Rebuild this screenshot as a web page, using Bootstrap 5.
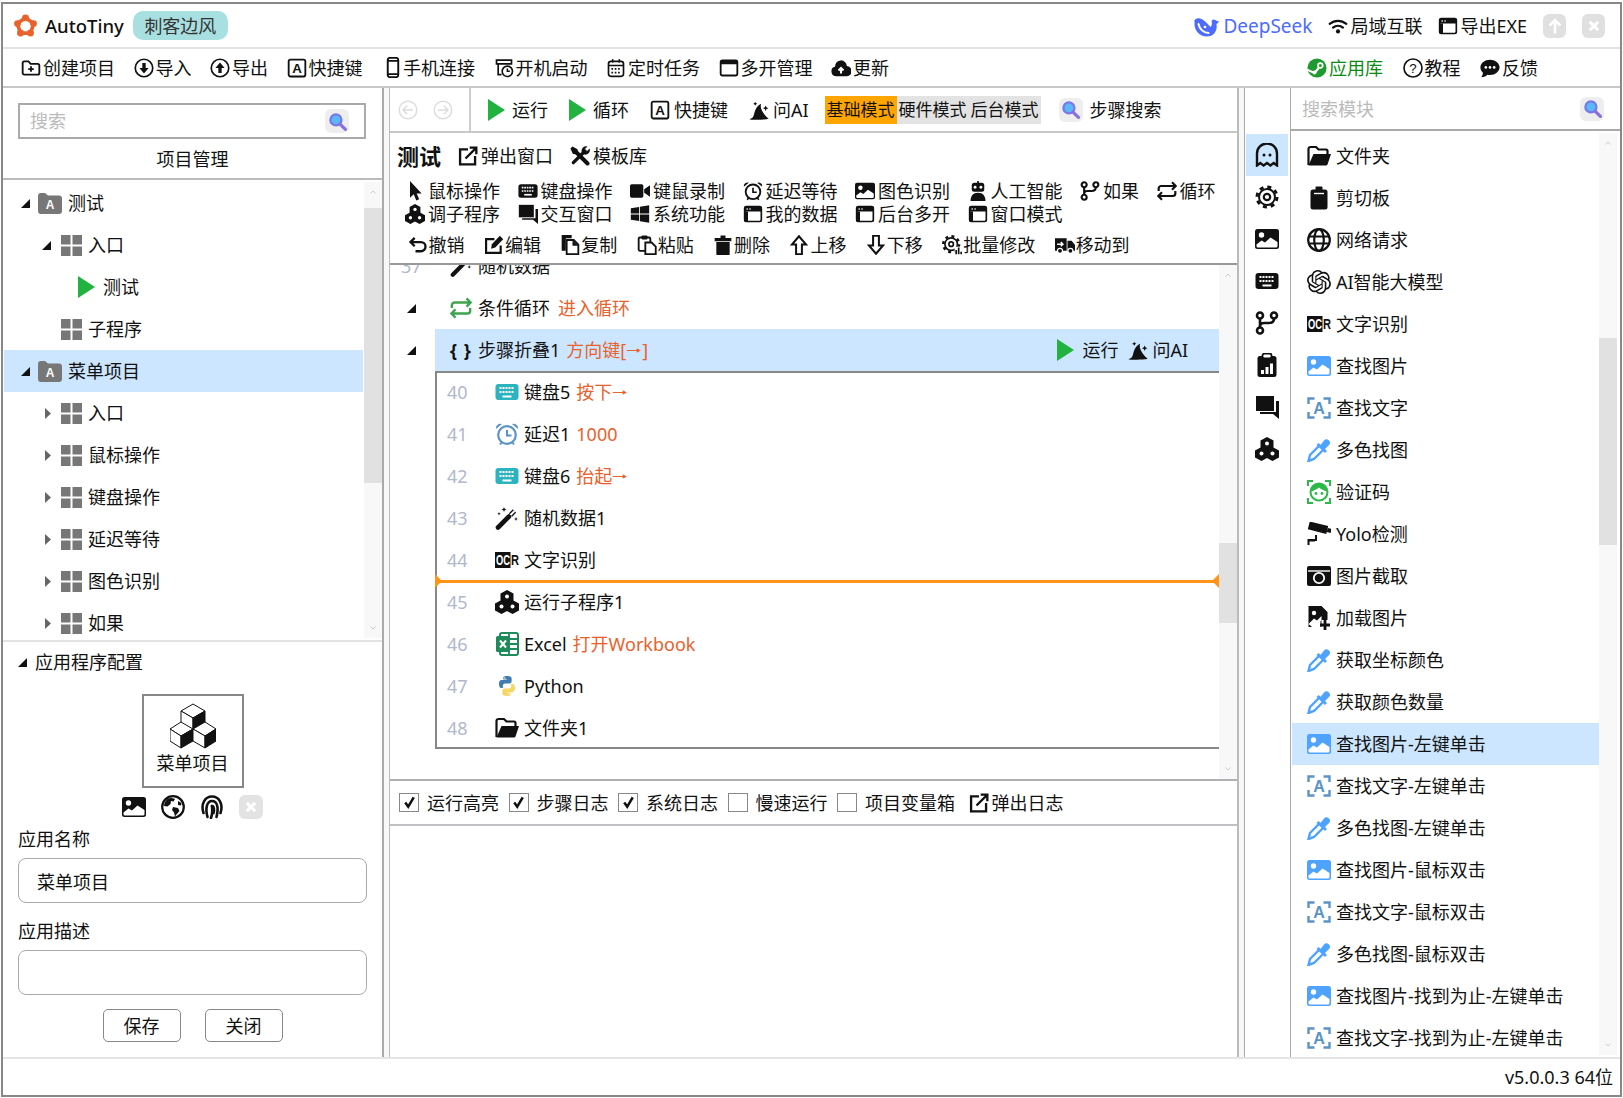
<!DOCTYPE html>
<html lang="zh-CN">
  <head>
    <meta charset="UTF-8" />
    <title>AutoTiny</title>
    <meta name="viewport" content="width=device-width, initial-scale=1.0" />
    <link href="https://cdn.jsdelivr.net/npm/bootstrap@5.3.3/dist/css/bootstrap.min.css" rel="stylesheet" />
    <style>
      body {
        font-family: "Noto Sans", "Noto Sans CJK SC", sans-serif;
        font-size: 18px;
        line-height: 24px;
        color: #111;
        background: #fff;
      }
      .app-win {
        width: 1621px;
        height: 1095px;
        margin: 2px 0 0 1px;
        border: 2px solid #888;
        overflow: hidden;
      }
      .ic { width: 20px; height: 20px; flex: none; }
      .ic-24 { width: 24px; height: 24px; flex: none; }
      .ic-play { width: 17px; height: 22px; flex: none; color: #22b23f; }
      .ic-phone { width: 16px; height: 21px; flex: none; }
      .ic-logo { width: 23px; height: 23px; flex: none; }

      .c-blue { color: #4ea3ff; }
      .c-steel { color: #5b93c7; }
      .c-teal { color: #2bb3bf; }
      .c-green { color: #3fa34d; }
      .c-lime { color: #2db84a; }

      /* title + main toolbar */
      .title-row { height: 45px; border-bottom: 2px solid #e3e3e3; padding: 0 15px 0 11px; }
      .brand { font-weight: 500; font-size: 18.5px; margin-left: 8px; }
      .tag-pill { width: 95px; height: 29px; background: #a8dfe0; border-radius: 10px; color: #333; margin-left: 9px; }
      .ds-text { color: #4d6bfe; font-size: 19px; }
      .ds-icon { width: 26px; height: 24px; color: #4d6bfe; }
      .sq-btn { width: 23px; height: 24px; background: #e0e0e0; border-radius: 6px; color: #fff; }
      .tool-row { height: 39px; border-bottom: 2px solid #c8c8c8; padding: 0 82px 0 18px; }
      .t-item { display: flex; align-items: center; gap: 2px; white-space: nowrap; }
      .top-tools { gap: 18.5px; }
      .top-links { gap: 19.5px; }
      .phone-item { margin-left: 4px; }
      .app-green { color: #0a8a12; }

      /* columns */
      .main-row { height: 969px; }
      .left-col { width: 381px; border-right: 2px solid #aaa; flex: none; }
      .gutter { width: 5px; background: #f8f8f8; flex: none; }
      .mid-col { width: 850px; border-left: 1px solid #bbb; border-right: 2px solid #bbb; flex: none; }
      .side-col { width: 47px; border-left: 1px solid #aaa; border-right: 1px solid #aaa; padding-top: 46px; flex: none; }
      .right-col { width: 329px; flex: none; }

      /* search boxes */
      .find-box { margin: 15px 16px 0 15px; height: 36px; border: 2px solid #aaa; padding: 0 15px 0 10px; }
      .find-input { border: 0; outline: 0; padding: 0; box-shadow: none; background: transparent; font-size: 18px; min-width: 0; }
      .find-input::placeholder { color: #bbb; }
      .find-btn { width: 24px; height: 24px; background: #eee; border-radius: 6px; flex: none; }
      .find-btn svg { width: 19px; height: 19px; }
      .panel-title { height: 41px; border-bottom: 2px solid #bbb; }

      /* scrollbars */
      .sb-track { width: 18px; flex: none; background: #f8f8f8; position: relative; overflow: hidden; }
      .sb-thumb { background: #e1e1e1; }
      .sb-arrow { position: absolute; left: 6px; width: 6px; height: 4px; color: #ccc; }
      .sb-up { top: 8px; }
      .sb-down { bottom: 8px; }
      .thumb-tree { margin-top: 26px; height: 275px; }
      .thumb-steps { margin-top: 278px; height: 80px; }
      .thumb-mods { margin-top: 205px; height: 207px; }

      /* project tree */
      .tree-area { height: 460px; padding-top: 2px; overflow: hidden; }
      .tree-list { width: 359px; flex: none; margin-left: 1px; }
      .tree-track { height: 456px; margin-left: 1px; }
      .tree-row { height: 42px; }
      .tree-row.active, .mod-row.active, .fold-head, .side-btn.active { background: #cce6ff; }
      .lv0 { padding-left: 17px; }
      .lv1 { padding-left: 38px; }
      .lv2 { padding-left: 74px; }
      .arrow-slot { display: flex; align-items: center; flex: none; }
      .lv0 .arrow-slot { width: 17px; }
      .lv1 .arrow-slot { width: 19px; }
      .arrow-open { width: 9px; height: 9px; color: #111; }
      .arrow-shut { width: 6px; height: 11px; color: #666; margin-left: 3px; }
      .tree-ic { width: 21px; height: 21px; color: #777; flex: none; margin-right: 6px; }
      .tree-folder { width: 24px; height: 21px; color: #777; flex: none; margin-right: 6px; }

      /* app config */
      .cfg-area { border-top: 2px solid #e3e3e3; }
      .cfg-head { height: 40px; padding-left: 15px; gap: 8px; }
      .app-tile { width: 102px; height: 94px; border: 2px solid #888; margin: 12px auto 0; }
      .cube-ic { width: 46px; height: 46px; margin-top: 7px; }
      .tile-name { line-height: 24px; margin-top: 2px; }
      .tile-tools { gap: 15px; margin-top: 7px; height: 24px; }
      .tile-x { width: 24px; height: 24px; background: #e3e3e3; border-radius: 6px; color: #fff; }
      .cfg-form { padding: 8px 15px 0; }
      .cfg-label { display: block; line-height: 24px; margin: 0 0 7px; }
      .cfg-input { height: 45px; border: 1.5px solid #aaa; border-radius: 8px; padding: 0 18px; font-size: 18px; color: #111; margin-bottom: 16px; box-shadow: none; }
      .cfg-actions { margin-top: -2px; }
      .cfg-btn { width: 78px; height: 33px; padding: 0; font-size: 18px; line-height: 28px; border: 1.5px solid #888; border-radius: 5px; background: #fff; color: #111; }

      /* centre toolbar */
      .run-row { height: 45px; border-bottom: 2px solid #c8c8c8; }
      .nav-part { width: 81px; height: 100%; border-right: 2px solid #ccc; padding-left: 8px; gap: 15px; flex: none; }
      .nav-ic { width: 20px; height: 20px; color: #ddd; }
      .run-part { padding-left: 17px; gap: 21px; }
      .run-item { display: flex; align-items: center; gap: 4px; white-space: nowrap; }
      .run-go { gap: 7px; }
      .mode-group { background: #e3e3e3; height: 28px; margin-left: -5px; }
      .mode-search { margin-left: -3px; }
      .mode-item { width: 72px; font-size: 17px; text-align: center; line-height: 28px; }
      .mode-item.on { background: #ffa500; }
      .op-panel { height: 132px; border-bottom: 2px solid #999; padding: 10px 0 0 7px; }
      .op-title { height: 26px; gap: 17px; }
      .op-name { font-weight: 700; font-size: 22px; }
      .op-link { display: flex; align-items: center; gap: 3px; }
      .op-grid { margin: 10px 0 0 8px; }
      .op-line { height: 23px; display: flex; gap: 17.5px; }
      .op-cell { display: flex; align-items: center; gap: 3px; white-space: nowrap; }
      .op-cell svg { width: 20px; height: 20px; flex: none; }
      .op-edit { margin: 8px 0 0 10.5px; height: 24px; display: flex; gap: 19.4px; }
      .op-edit .op-cell { gap: 1px; }

      /* step list */
      .step-area { height: 514px; overflow: hidden; }
      .step-list { width: 829px; flex: none; }
      .step-row { height: 42px; }
      .first-cut { margin-top: -20px; padding-left: 11px; }
      .first-cut .num { width: 49px; }
      .num { color: #b0b8cc; flex: none; }
      .outer-arrow { width: 45px; padding-left: 17px; flex: none; }
      .step-ic { width: 22px; height: 22px; flex: none; margin-right: 6px; }
      .loop-row { padding-left: 17px; }
      .loop-row .arrow-slot { width: 43px; }
      .val { color: #e8622c; margin-left: 6px; }
      .fold-wrap { height: 42px; }
      .fold-head { height: 42px; padding-left: 15px; padding-right: 31px; }
      .fold-run { gap: 8px; }
      .fold-run-text { margin-right: 2px; }
      .brace { font-weight: 700; width: 22px; margin-right: 6px; white-space: nowrap; letter-spacing: 1px; }
      .fold-box {
        margin-left: 45px;
        height: 378px;
        box-shadow: inset 2px 0 #888, inset 0 2px #888, inset 0 -2px #888;
      }
      .in-row { height: 42px; padding-left: 12px; position: relative; }
      .in-row .num { width: 48px; }
      .in-ic { width: 24px; height: 24px; flex: none; margin-right: 5px; }
      .in-kb { width: 24px; height: 18px; flex: none; margin-right: 5px; }
      .drop-line { position: absolute; left: 0; right: 0; bottom: -2px; height: 3px; background: #ff9419; }
      .drop-l, .drop-r { position: absolute; top: -6px; width: 0; height: 0; border-top: 7px solid transparent; border-bottom: 7px solid transparent; }
      .drop-l { left: 0; border-left: 7px solid #ff9419; }
      .drop-r { right: 0; border-right: 7px solid #ff9419; }
      .check-row { height: 47px; border-top: 2px solid #b0b0b5; border-bottom: 2px solid #c0c0c5; padding-left: 9px; }
      .chk { display: flex; align-items: center; gap: 8px; margin-right: 9.5px; white-space: nowrap; }
      .chk .form-check-input {
        width: 20px;
        height: 19px;
        margin: 0;
        border: 1.5px solid #888;
        border-radius: 0;
        box-shadow: none;
      }
      .chk .form-check-input:checked {
        background-color: #fff;
        border-color: #888;
        background-image: url("data:image/svg+xml,%3csvg xmlns='http://www.w3.org/2000/svg' viewBox='0 0 20 20'%3e%3cpath fill='none' stroke='%23111' stroke-width='3' d='M5 10l3.5 5L15 4'/%3e%3c/svg%3e");
      }

      /* module side */
      .side-btn { width: 42px; height: 42px; margin-left: 1px; }
      .side-btn svg { width: 24px; height: 24px; }
      .mod-search { height: 43px; border-bottom: 2px solid #aaa; padding: 0 16px 0 11px; }
      .mod-area { height: 922px; margin-top: 2px; overflow: hidden; }
      .mod-list { width: 307px; flex: none; margin-left: 1px; margin-top: 2px; }
      .mod-row { height: 42px; padding-left: 15px; gap: 5px; white-space: nowrap; }
      .status-row { height: 38px; border-top: 2px solid #e5e5e5; padding-right: 7px; }
    </style>
  </head>
  <body>
    <svg class="d-none" xmlns="http://www.w3.org/2000/svg">
      <symbol id="i-logo" viewBox="0 0 24 24">
        <polygon points="12,4 20.500,10 17.300,20 6.700,20 3.500,10" fill="#fff" stroke="#e8622c" stroke-width="3.800" stroke-linejoin="round" />
        <g fill="#e8622c"><circle cx="12" cy="4" r="3.600" /><circle cx="20.300" cy="10" r="3.600" /><circle cx="17.200" cy="19.800" r="3.600" /><circle cx="6.800" cy="19.800" r="3.600" /><circle cx="3.700" cy="10" r="3.600" /></g>
      </symbol>
      <symbol id="i-whale" viewBox="0 0 26 24">
        <path fill="currentColor" d="M1.500 9c-.5 7.500 5 13.500 12.500 13.500 5 0 8.500-3 9.500-8 .5-2 0-3 0-4.500 1-.5 2-1.500 2.500-3-1.500.5-2.500 0-3.500-1-1.500-1-3-.5-4 1 .5 2 1 4-1 6-2-2-5-6-9-8-2-1-5-1-7 1z" />
        <path fill="none" stroke="#fff" stroke-width="2" stroke-linecap="round" d="M5.500 10c1 5 5 9 10 9" />
        <circle cx="12" cy="13" r="1.300" fill="#fff" />
      </symbol>
      <symbol id="i-wifi" viewBox="0 0 24 24">
        <g fill="none" stroke="currentColor" stroke-width="2.600" stroke-linecap="round"><path d="M2 9.500c6-5 14-5 20 0" /><path d="M6 14c3.500-3 8.500-3 12 0" /></g>
        <circle cx="12" cy="18.500" r="2.500" fill="currentColor" />
      </symbol>
      <symbol id="i-appwin" viewBox="0 0 24 24">
        <rect x="2" y="3" width="20" height="18" rx="2" fill="none" stroke="currentColor" stroke-width="2" />
        <rect x="2" y="3" width="20" height="6" fill="currentColor" />
        <rect x="2" y="9" width="4" height="12" fill="currentColor" />
        <circle cx="5" cy="6" r="1" fill="#fff" /><circle cx="8.500" cy="6" r="1" fill="#fff" />
      </symbol>
      <symbol id="i-winline" viewBox="0 0 24 24">
        <rect x="2" y="3" width="20" height="18" rx="2" fill="none" stroke="currentColor" stroke-width="2.200" />
        <rect x="2" y="3" width="20" height="4.500" fill="currentColor" />
      </symbol>
      <symbol id="i-folderplus" viewBox="0 0 24 24">
        <path fill="none" stroke="currentColor" stroke-width="2.200" d="M2 6a2 2 0 0 1 2-2h5l2.500 3H20a2 2 0 0 1 2 2v9a2 2 0 0 1-2 2H4a2 2 0 0 1-2-2z" />
        <path fill="none" stroke="currentColor" stroke-width="2.200" d="M12 10v6.500M8.700 13.300h6.600" />
      </symbol>
      <symbol id="i-downc" viewBox="0 0 24 24">
        <circle cx="12" cy="12" r="10.500" fill="none" stroke="currentColor" stroke-width="2" />
        <path fill="currentColor" d="M10 6h4v6h3.500L12 18.500 6.500 12H10z" />
      </symbol>
      <symbol id="i-upc" viewBox="0 0 24 24">
        <circle cx="12" cy="12" r="10.500" fill="none" stroke="currentColor" stroke-width="2" />
        <path fill="currentColor" d="M10 18h4v-6h3.500L12 5.500 6.500 12H10z" />
      </symbol>
      <symbol id="i-abox" viewBox="0 0 24 24">
        <rect x="2" y="2" width="20" height="20" rx="2" fill="none" stroke="currentColor" stroke-width="2.200" />
        <path d="M3 22.500h18" stroke="currentColor" stroke-width="1.500" />
        <text x="12" y="18" text-anchor="middle" font-size="16" font-weight="700" font-family="Liberation Sans" fill="currentColor">A</text>
      </symbol>
      <symbol id="i-phone" viewBox="0 0 16 24">
        <rect x="2" y="1" width="12" height="22" rx="2.500" fill="none" stroke="currentColor" stroke-width="2.200" />
        <path d="M2 4.500h12M2 19.500h12" stroke="currentColor" stroke-width="2" />
      </symbol>
      <symbol id="i-boot" viewBox="0 0 24 24">
        <path fill="none" stroke="currentColor" stroke-width="2" d="M3 2.500h18v4.500H3zM5 7v13h4" />
        <circle cx="16" cy="16" r="6.200" fill="#fff" stroke="currentColor" stroke-width="2" />
        <path fill="none" stroke="currentColor" stroke-width="1.800" d="M16 12.500V16h3" />
      </symbol>
      <symbol id="i-cal" viewBox="0 0 24 24">
        <rect x="3" y="4" width="18" height="18" rx="3" fill="none" stroke="currentColor" stroke-width="2" />
        <path fill="none" stroke="currentColor" stroke-width="2" d="M8 1.500v4M16 1.500v4M3 9h18" />
        <path fill="none" stroke="currentColor" stroke-width="2" stroke-dasharray="2 2" d="M6.500 13h11M6.500 17.500h11" />
      </symbol>
      <symbol id="i-cloud" viewBox="0 0 24 24">
        <path fill="currentColor" d="M6.500 22a6 6 0 0 1-1.500-11.800A7 7 0 0 1 19 9.500 6.200 6.200 0 0 1 18 22z" />
        <path fill="none" stroke="#fff" stroke-width="2.400" d="M12 18.500v-6M9 15l3-3 3 3" />
      </symbol>
      <symbol id="i-steam" viewBox="0 0 24 24">
        <circle cx="12" cy="12" r="11.500" fill="#1f9a2e" />
        <path d="M0 14l9 4 5-6" fill="none" stroke="#fff" stroke-width="2.600" />
        <circle cx="16" cy="9" r="3.800" fill="#fff" /><circle cx="16" cy="9" r="1.800" fill="#1f9a2e" />
        <circle cx="9" cy="17.500" r="2.400" fill="#fff" />
      </symbol>
      <symbol id="i-help" viewBox="0 0 24 24">
        <circle cx="12" cy="12" r="10.800" fill="none" stroke="currentColor" stroke-width="2" />
        <text x="12" y="18" text-anchor="middle" font-size="16" font-family="Liberation Sans" fill="currentColor">?</text>
      </symbol>
      <symbol id="i-chatd" viewBox="0 0 24 24">
        <path fill="currentColor" d="M12 2c6 0 11.500 4 11.500 9.200S18 20.500 12 20.500c-1.200 0-2.300-.2-3.300-.5C7.500 21.500 5 23 1.500 23c1-1 2-3 2-5.200C1.500 16 .5 13.600.5 11.200.5 6 6 2 12 2z" />
        <g fill="#fff"><circle cx="7" cy="11.300" r="1.600" /><circle cx="12" cy="11.300" r="1.600" /><circle cx="17" cy="11.300" r="1.600" /></g>
      </symbol>
      <symbol id="i-play" viewBox="0 0 17 22"><polygon points="0,0 17,11 0,22" fill="currentColor" /></symbol>
      <symbol id="i-hat" viewBox="0 0 24 24">
        <path fill="currentColor" d="M.5 23c3-.5 4.500-2 5.500-5.500 1-4.500 2.500-10 8.500-13-1 3.500 0 6.500 1.500 9 1.500 2.500 3.500 6 7.500 9-2 1.200-21.500 1.500-23 .5z" />
        <path fill="currentColor" d="M20 6.500l1 2.300 2.300 1-2.300 1-1 2.300-1-2.300-2.300-1 2.300-1zM7.500 2l.8 1.700L10 4.500l-1.700.8L7.500 7l-.8-1.700L5 4.500l1.700-.8z" />
      </symbol>
      <symbol id="i-find" viewBox="0 0 24 24">
        <circle cx="10" cy="10" r="7" fill="#5ab8f8" stroke="#7878e8" stroke-width="2.800" />
        <path d="M15.500 15.500l6.500 6.500" stroke="#8a6fe0" stroke-width="4" stroke-linecap="round" />
      </symbol>
      <symbol id="i-popup" viewBox="0 0 24 24">
        <path fill="none" stroke="currentColor" stroke-width="2.800" d="M12 4H2.500v18h18V12" />
        <path fill="none" stroke="currentColor" stroke-width="2.800" d="M9 15L21.500 2.500M14 2h8v8" />
      </symbol>
      <symbol id="i-tools" viewBox="0 0 24 24">
        <g fill="none" stroke="currentColor" stroke-linecap="round"><path d="M6 6l15 15" stroke-width="4.800" /><path d="M18 6L4 20" stroke-width="4" /></g>
        <path fill="currentColor" d="M.5 3L3 .5l6 3.500.5 4-2 2-4-.5zM14 7a5.500 5.500 0 0 1 7-6.500l-3.500 3.500L20 6.500l3.500-3.500A5.500 5.500 0 0 1 16.500 10z" />
      </symbol>
      <symbol id="i-cursor" viewBox="0 0 24 24"><polygon points="6,0 6,20 10.500,16 13.500,23.500 17,22 14,15 20,15" fill="currentColor" /></symbol>
      <symbol id="i-kb" viewBox="0 0 24 18">
        <rect x=".5" y="1" width="23" height="16" rx="3" fill="currentColor" />
        <g stroke="#fff" stroke-width="2" fill="none"><path stroke-dasharray="2 1" d="M4.500 5h15M4.500 9h15" /><path d="M7.500 13.500h9" /></g>
      </symbol>
      <symbol id="i-video" viewBox="0 0 24 24">
        <rect x="0" y="4" width="16" height="16" rx="2" fill="currentColor" /><polygon points="17,10 24,5 24,19 17,14" fill="currentColor" />
      </symbol>
      <symbol id="i-alarm" viewBox="0 0 24 24">
        <circle cx="12" cy="13" r="8.800" fill="none" stroke="currentColor" stroke-width="2.200" />
        <path fill="none" stroke="currentColor" stroke-width="2" d="M12 8v5.500h4.500M5 22.500l2-2.500M19 22.500l-2-2.500" />
        <path fill="currentColor" d="M1 7a4.500 4.500 0 0 1 6-5zM23 7a4.500 4.500 0 0 0-6-5z" />
      </symbol>
      <symbol id="i-image" viewBox="0 0 24 24">
        <rect x="0" y="2" width="24" height="20" rx="2.500" fill="currentColor" />
        <circle cx="6.500" cy="8" r="2.700" fill="#fff" />
        <path fill="#fff" d="M1.500 17.500l5-4 3.500 2 5.500-5 7 4.500v4a1.500 1.500 0 0 1-1.500 1.500H3a1.500 1.500 0 0 1-1.500-1.500z" />
      </symbol>
      <symbol id="i-robot" viewBox="0 0 24 24">
        <rect x="4.500" y="2" width="15" height="11" rx="3" fill="currentColor" />
        <path d="M12 0v3" stroke="currentColor" stroke-width="2" />
        <circle cx="8.500" cy="7.500" r="1.700" fill="#fff" /><circle cx="15.500" cy="7.500" r="1.700" fill="#fff" />
        <path fill="currentColor" d="M3 24c0-6 3-10 9-10s9 4 9 10z" />
      </symbol>
      <symbol id="i-branch" viewBox="0 0 24 24">
        <g fill="none" stroke="currentColor" stroke-width="2.600"><circle cx="5" cy="4.500" r="3" /><circle cx="5" cy="19.500" r="3" /><circle cx="19" cy="4.500" r="3" /><path d="M5 7.500v9M19 7.500c0 3-2 4.500-5 4.500H9c-2.500 0-4 1-4 3" /></g>
      </symbol>
      <symbol id="i-loop" viewBox="0 0 24 24">
        <g fill="none" stroke="currentColor" stroke-width="2.600"><path d="M2 12V9a3 3 0 0 1 3-3h17M18 1.500L22.500 6 18 10.500" /><path d="M22 12v3a3 3 0 0 1-3 3H2M6 13.500L1.500 18 6 22.500" /></g>
      </symbol>
      <symbol id="i-cubes" viewBox="0 0 24 24">
        <g fill="currentColor"><path d="M12 0l6.500 3.500v7L12 14 5.500 10.500v-7z" /><path d="M6.500 10l6.500 3.500v7L6.500 24 0 20.500v-7z" /><path d="M17.500 10l6.500 3.500v7L17.500 24 11 20.500v-7z" /></g>
        <g fill="#fff"><circle cx="12" cy="6.500" r="2" /><circle cx="6.500" cy="16.500" r="2" /><circle cx="17.500" cy="16.500" r="2" /></g>
      </symbol>
      <symbol id="i-chats" viewBox="0 0 24 24">
        <path fill="currentColor" d="M1 1h18v15H1z" /><path fill="currentColor" d="M21 6h3v18l-6-5H5v-2h16z" />
      </symbol>
      <symbol id="i-win" viewBox="0 0 24 24">
        <g fill="currentColor"><polygon points="1,5 11,3.500 11,11.500 1,11.500" /><polygon points="12,3.300 23,1.500 23,11.500 12,11.500" /><polygon points="1,12.500 11,12.500 11,20.500 1,19" /><polygon points="12,12.500 23,12.500 23,22.500 12,20.700" /></g>
      </symbol>
      <symbol id="i-undo" viewBox="0 0 24 24">
        <path fill="none" stroke="currentColor" stroke-width="2.800" d="M8 3.500L3 8.500l5 5M3 8.500h12.500a5.500 5.500 0 0 1 0 11H9" />
      </symbol>
      <symbol id="i-pencil" viewBox="0 0 24 24">
        <path fill="none" stroke="currentColor" stroke-width="2.600" d="M20 12.500v9H2.500V5h10" />
        <path fill="currentColor" d="M8.500 16.500l1-5.500L19 1l4 4-9.500 10z" />
      </symbol>
      <symbol id="i-copy" viewBox="0 0 24 24">
        <path fill="currentColor" d="M2 0h12v4H7v15H2z" />
        <path fill="#fff" stroke="currentColor" stroke-width="2.200" d="M8 6h8.500L22 11.500v11.400H8z" />
        <path fill="currentColor" d="M15 6l7 7h-7z" />
      </symbol>
      <symbol id="i-paste" viewBox="0 0 24 24">
        <rect x="2" y="3" width="14" height="16" rx="1.500" fill="none" stroke="currentColor" stroke-width="2.200" />
        <rect x="5.500" y=".5" width="7" height="5" rx="1" fill="currentColor" />
        <path fill="#fff" stroke="currentColor" stroke-width="2.200" d="M10 9h7.500l5 5v9H10z" />
      </symbol>
      <symbol id="i-trash" viewBox="0 0 24 24">
        <path fill="currentColor" d="M2 3.500h20V7.500H2zM9 .5h6v3H9zM4 8.500h16V23a1 1 0 0 1-1 1H5a1 1 0 0 1-1-1z" />
      </symbol>
      <symbol id="i-upo" viewBox="0 0 24 24"><path fill="none" stroke="currentColor" stroke-width="2.400" d="M12 1.500L3.500 11.500h5V23h7V11.500h5z" /></symbol>
      <symbol id="i-downo" viewBox="0 0 24 24"><path fill="none" stroke="currentColor" stroke-width="2.400" d="M12 22.500l8.500-10h-5V1h-7v11.500h-5z" /></symbol>
      <symbol id="i-gear" viewBox="0 0 24 24">
        <g fill="none" stroke="currentColor"><circle cx="12" cy="12" r="10" stroke-width="3" stroke-dasharray="4 3.850" /><circle cx="12" cy="12" r="8" stroke-width="2" /><circle cx="12" cy="12" r="3.200" stroke-width="2.200" /></g>
      </symbol>
      <symbol id="i-gearbars" viewBox="0 0 24 24">
        <g fill="none" stroke="currentColor"><circle cx="11" cy="11" r="9.500" stroke-width="3" stroke-dasharray="3.500 3.960" /><circle cx="11" cy="11" r="7.500" stroke-width="2" /><circle cx="11" cy="11" r="2.700" stroke-width="2" /></g>
        <rect x="15" y="14" width="9" height="10" fill="#fff" /><path fill="currentColor" d="M16 18h2v5h-2zM19 15h2v8h-2zM22 20h2v3h-2z" />
      </symbol>
      <symbol id="i-truck" viewBox="0 0 24 24">
        <path fill="currentColor" d="M0 4h14v15H0zM15 7h5l4 5v7h-9z" />
        <g fill="currentColor" stroke="#fff" stroke-width="1.400"><circle cx="6" cy="19" r="3" /><circle cx="18.500" cy="19" r="3" /></g>
        <path fill="none" stroke="#fff" stroke-width="1.800" d="M2.500 11h7M7 8.500l2.500 2.500L7 13.500" />
      </symbol>
      <symbol id="i-wand" viewBox="0 0 24 24">
        <path d="M3 21.500L14 10.500" stroke="currentColor" stroke-width="4.600" stroke-linecap="round" />
        <path d="M15.500 9l4-4" stroke="currentColor" stroke-width="4.600" />
        <path d="M15.500 9l4-4" stroke="#fff" stroke-width="2" />
        <path fill="currentColor" d="M9 1l.7 1.800L11.500 3.500l-1.800.7L9 6l-.7-1.800L6.500 3.500l1.800-.7zM21 11l.6 1.500 1.400.5-1.400.6L21 15l-.6-1.400-1.400-.6 1.400-.5zM4 6l.5 1.200 1.200.5-1.200.5L4 9.500l-.5-1.300-1.200-.5 1.200-.5z" />
      </symbol>
      <symbol id="i-excel" viewBox="0 0 24 24">
        <rect x="5" y="1" width="18" height="22" rx="2" fill="#fff" stroke="#1f8a5a" stroke-width="2" />
        <path fill="none" stroke="#1f8a5a" stroke-width="1.800" d="M14 1v22M14 7h9M14 12h9M14 17h9" />
        <rect x="1" y="4" width="14" height="16" rx="1.500" fill="#1f8a5a" />
        <path fill="none" stroke="#fff" stroke-width="2" d="M5 8.500l6 7M11 8.500l-6 7" />
      </symbol>
      <symbol id="i-python" viewBox="0 0 24 24">
        <path fill="#3f7cb0" d="M11.900 2C8 2 8.300 3.700 8.300 3.700v1.800h3.800V6H6.800S4 5.700 4 9.900s2.400 4 2.400 4h1.500v-2s-.1-2.400 2.400-2.400h4s2.300 0 2.300-2.200V4.300S17 2 11.900 2zM9.800 3.300a.7.7 0 1 1 0 1.400.7.7 0 0 1 0-1.400z" />
        <path fill="#f7d663" d="M12.100 22c3.900 0 3.600-1.700 3.600-1.700v-1.800h-3.800V18h5.300s2.800.3 2.800-3.900-2.400-4-2.400-4h-1.500v2s.1 2.400-2.400 2.400h-4s-2.300 0-2.300 2.200v3S7 22 12.100 22zm2.100-1.300a.7.7 0 1 1 0-1.400.7.7 0 0 1 0 1.400z" />
      </symbol>
      <symbol id="i-open" viewBox="0 0 24 24">
        <path fill="none" stroke="currentColor" stroke-width="2.200" d="M1.500 21V5a2 2 0 0 1 2-2h5.500l2.500 2.500H19a1.500 1.500 0 0 1 1.500 1.500V10" />
        <path fill="currentColor" d="M6.500 10H24l-3.500 10.500a1.500 1.500 0 0 1-1.400 1H1.500z" />
      </symbol>
      <symbol id="i-clip" viewBox="0 0 24 24">
        <rect x="3.500" y="3.500" width="17" height="20" rx="2.500" fill="currentColor" />
        <rect x="8.500" y=".5" width="7" height="5" rx="1" fill="currentColor" />
        <path d="M7 7.500h10" stroke="#fff" stroke-width="1.400" />
      </symbol>
      <symbol id="i-globe" viewBox="0 0 24 24">
        <g fill="none" stroke="currentColor" stroke-width="2.200"><circle cx="12" cy="12" r="10.800" /><ellipse cx="12" cy="12" rx="4.800" ry="10.800" /><path d="M2.500 8.500h19M2.500 15.500h19" /></g>
      </symbol>
      <symbol id="i-openai" viewBox="0 0 24 24">
        <path fill="currentColor" d="M22.2819 9.8211a5.9847 5.9847 0 0 0-.5157-4.9108 6.0462 6.0462 0 0 0-6.5098-2.9A6.0651 6.0651 0 0 0 4.9807 4.1818a5.9847 5.9847 0 0 0-3.9977 2.9 6.0462 6.0462 0 0 0 .7427 7.0966 5.98 5.98 0 0 0 .511 4.9107 6.051 6.051 0 0 0 6.5146 2.9001A5.9847 5.9847 0 0 0 13.2599 24a6.0557 6.0557 0 0 0 5.7718-4.2058 5.9894 5.9894 0 0 0 3.9977-2.9001 6.0557 6.0557 0 0 0-.7475-7.0729zm-9.022 12.6081a4.4755 4.4755 0 0 1-2.8764-1.0408l.1419-.0804 4.7783-2.7582a.7948.7948 0 0 0 .3927-.6813v-6.7369l2.02 1.1686a.071.071 0 0 1 .038.052v5.5826a4.504 4.504 0 0 1-4.4945 4.4944zm-9.6607-4.1254a4.4708 4.4708 0 0 1-.5346-3.0137l.142.0852 4.783 2.7582a.7712.7712 0 0 0 .7806 0l5.8428-3.3685v2.3324a.0804.0804 0 0 1-.0332.0615L9.74 19.9502a4.4992 4.4992 0 0 1-6.1408-1.6464zM2.3408 7.8956a4.485 4.485 0 0 1 2.3655-1.9728V11.6a.7664.7664 0 0 0 .3879.6765l5.8144 3.3543-2.0201 1.1685a.0757.0757 0 0 1-.071 0l-4.8303-2.7865A4.504 4.504 0 0 1 2.3408 7.872zm16.5963 3.8558L13.1038 8.364 15.1192 7.2a.0757.0757 0 0 1 .071 0l4.8303 2.7913a4.4944 4.4944 0 0 1-.6765 8.1042v-5.6772a.79.79 0 0 0-.407-.667zm2.0107-3.0231l-.142-.0852-4.7735-2.7818a.7759.7759 0 0 0-.7854 0L9.409 9.2297V6.8974a.0662.0662 0 0 1 .0284-.0615l4.8303-2.7866a4.4992 4.4992 0 0 1 6.6802 4.66zM8.3065 12.863l-2.02-1.1638a.0804.0804 0 0 1-.038-.0567V6.0742a4.4992 4.4992 0 0 1 7.3757-3.4537l-.142.0805L8.704 5.459a.7948.7948 0 0 0-.3927.6813zm1.0976-2.3654l2.602-1.4998 2.6069 1.4998v2.9994l-2.5974 1.4997-2.6067-1.4997Z" />
      </symbol>
      <symbol id="i-ocr" viewBox="0 0 24 16">
        <rect x="0" y="0" width="15.500" height="16" fill="currentColor" />
        <text x="1" y="13" font-size="14" font-weight="700" font-family="Liberation Sans" fill="#fff" textLength="14" lengthAdjust="spacingAndGlyphs">OC</text>
        <text x="16" y="13" font-size="14" font-weight="700" font-family="Liberation Sans" fill="currentColor" textLength="8" lengthAdjust="spacingAndGlyphs">R</text>
      </symbol>
      <symbol id="i-scan" viewBox="0 0 24 24">
        <path fill="none" stroke="currentColor" stroke-width="2.400" d="M1.500 8V2.500h6M16.500 2.500h6V8M22.500 16v5.500h-6M7.500 21.500h-6V16" />
        <text x="12" y="18" text-anchor="middle" font-size="16" font-weight="700" font-family="Liberation Sans" fill="currentColor">A</text>
      </symbol>
      <symbol id="i-drop" viewBox="0 0 24 24">
        <path fill="none" stroke="currentColor" stroke-width="2.400" d="M12.500 7.500l4 4-9.500 9.500-5.500 2 1.500-6z" />
        <path fill="currentColor" d="M11.500 5l2 2 3.500-4.500a3.300 3.300 0 0 1 5 4.500L18 11l2 2-2 2L9.500 7z" />
      </symbol>
      <symbol id="i-face" viewBox="0 0 24 24">
        <path fill="none" stroke="currentColor" stroke-width="2" d="M1 6V1h5M18 1h5v5M23 18v5h-5M6 23H1v-5" />
        <circle cx="12" cy="12" r="8.500" fill="none" stroke="currentColor" stroke-width="2" />
        <path fill="currentColor" d="M3.500 11.500c1-5.500 4-8 8.500-8s7.500 2.500 8.500 8c-3-.5-6-2-8.500-4-2.500 2-5.500 3.500-8.500 4z" />
        <circle cx="9" cy="13.500" r="1.400" fill="currentColor" /><circle cx="15" cy="13.500" r="1.400" fill="currentColor" />
      </symbol>
      <symbol id="i-cctv" viewBox="0 0 24 24">
        <g transform="rotate(14 12 8)" fill="currentColor"><rect x="1" y="2" width="19" height="8" /><rect x="20" y="4" width="4" height="4" /></g>
        <path fill="none" stroke="currentColor" stroke-width="2" d="M9 13v5H1.500v5M1.500 18.500H8" />
      </symbol>
      <symbol id="i-camera" viewBox="0 0 24 24">
        <rect x="0" y="2" width="24" height="20" rx="2" fill="currentColor" />
        <path d="M1 7h22" stroke="#fff" stroke-width="1.400" />
        <circle cx="12" cy="14" r="5.200" fill="none" stroke="#fff" stroke-width="1.800" />
      </symbol>
      <symbol id="i-fileimg" viewBox="0 0 24 24">
        <path fill="currentColor" d="M1.500 0h13l6 6v8h-6v7h-13z" />
        <circle cx="7" cy="7" r="2.200" fill="#fff" />
        <path fill="#fff" d="M1.500 18l5.500-5.500 3 2 4.500-4.500v5h-1v6H5z" />
        <path fill="none" stroke="currentColor" stroke-width="2.800" d="M18 14v10M13 19h10" />
      </symbol>
      <symbol id="i-ghost" viewBox="0 0 24 24">
        <path fill="none" stroke="currentColor" stroke-width="2.400" d="M2 22.500V10.500a10 10 0 0 1 20 0v12l-3.300-2.500-3.300 2.500-3.400-2.500-3.400 2.500-3.300-2.500z" />
        <circle cx="9" cy="12" r="1.500" fill="currentColor" /><circle cx="15" cy="12" r="1.500" fill="currentColor" />
      </symbol>
      <symbol id="i-clipdata" viewBox="0 0 24 24">
        <rect x="2.500" y="3" width="19" height="21" rx="2.500" fill="currentColor" />
        <rect x="7.500" y=".5" width="9" height="5" rx="2" fill="#fff" stroke="currentColor" stroke-width="1.800" />
        <path fill="#fff" d="M6 17h3v4H6zM10.500 14H13.500v7h-3zM15 10.500h3V21h-3z" />
      </symbol>
      <symbol id="i-earth" viewBox="0 0 24 24">
        <circle cx="12" cy="12" r="10.800" fill="#fff" stroke="currentColor" stroke-width="2.200" />
        <path fill="currentColor" d="M7 3.500c3-1 5-.5 7 .5l-1.500 2.500L10 6l-.5 3-3 2.500L3 11c0-3 2-6 4-7.500zM12 12l5 1 1.500 3-3 3.500-1.500 2-1-4-2-2.500zM17 6l3.500 2-.5 2.500-3-.5z" />
      </symbol>
      <symbol id="i-finger" viewBox="0 0 24 24">
        <g fill="none" stroke="currentColor" stroke-width="2.600" stroke-linecap="round"><path d="M3.500 18C.5 9 5 1.500 12 1.500S23.500 9 20.500 18" /><path d="M7.500 22C5 13 7 6 12 6s7 6 4.500 16" /><path d="M11 23c1.500-4 1.500-8 1-12" /><path d="M12 11c2 0 2.500 4 1.500 7" /></g>
      </symbol>
      <symbol id="i-x" viewBox="0 0 24 24"><path d="M7 7l10 10M17 7L7 17" stroke="currentColor" stroke-width="3.600" /></symbol>
      <symbol id="i-uparrow" viewBox="0 0 24 24"><path fill="none" stroke="currentColor" stroke-width="3.200" d="M12 21V5M5.500 11.500L12 5l6.500 6.500" /></symbol>
      <symbol id="i-back" viewBox="0 0 24 24">
        <circle cx="12" cy="12" r="10.500" fill="none" stroke="currentColor" stroke-width="1.800" />
        <path fill="none" stroke="currentColor" stroke-width="1.800" d="M18 12H6M11 7l-5 5 5 5" />
      </symbol>
      <symbol id="i-forward" viewBox="0 0 24 24">
        <circle cx="12" cy="12" r="10.500" fill="none" stroke="currentColor" stroke-width="1.800" />
        <path fill="none" stroke="currentColor" stroke-width="1.800" d="M6 12h12M13 7l5 5-5 5" />
      </symbol>
      <symbol id="i-grid" viewBox="0 0 21 21">
        <path fill="currentColor" d="M0 0h9.500v9.500H0zM11.500 0H21v9.500h-9.500zM0 11.500h9.500V21H0zM11.500 11.500H21V21h-9.500z" />
      </symbol>
      <symbol id="i-pfolder" viewBox="0 0 24 21">
        <path fill="currentColor" d="M0 3a3 3 0 0 1 3-3h4l3 2.500h11a3 3 0 0 1 3 3V18a3 3 0 0 1-3 3H3a3 3 0 0 1-3-3z" />
        <text x="12" y="16" text-anchor="middle" font-size="12" font-weight="700" font-family="Liberation Sans" fill="#fff">A</text>
      </symbol>
      <symbol id="i-open3" viewBox="0 0 9 9"><polygon points="9,0 9,9 0,9" fill="currentColor" /></symbol>
      <symbol id="i-shut3" viewBox="0 0 6 11"><polygon points="0,0 6,5.500 0,11" fill="currentColor" /></symbol>
      <symbol id="i-sbup" viewBox="0 0 6 4"><path d="M.5 3.500L3 1l2.500 2.500" fill="none" stroke="currentColor" /></symbol>
      <symbol id="i-sbdown" viewBox="0 0 6 4"><path d="M.5.500L3 3 5.500.500" fill="none" stroke="currentColor" /></symbol>
      <symbol id="i-cube3" viewBox="0 0 46 46">
        <g stroke="#111" stroke-width="1" stroke-linejoin="round">
          <path fill="#fff" d="M23 1l12 7-12 7-12-7z" /><path fill="#fff" d="M11 8l12 7v12l-12-7z" /><path fill="#111" d="M35 8v12l-12 7V15z" />
          <path fill="#fff" d="M11 19l12 7-12 7-11-7z" /><path fill="#fff" d="M0 26l11 7v12L0 38z" /><path fill="#111" d="M23 26v12l-12 7V33z" />
          <path fill="#fff" d="M35 19l11 7-11 7-12-7z" /><path fill="#fff" d="M23 26l12 7v12l-12-7z" /><path fill="#111" d="M46 26v12l-11 7V33z" />
        </g>
      </symbol>
    </svg>

    <div class="app-win d-flex flex-column">
      <div class="title-row d-flex align-items-center">
        <svg class="ic-logo"><use href="#i-logo" /></svg>
        <span class="brand">AutoTiny</span>
        <span class="tag-pill d-flex align-items-center justify-content-center">刺客边风</span>
        <div class="ms-auto d-flex align-items-center">
          <svg class="ds-icon"><use href="#i-whale" /></svg>
          <span class="ds-text ms-1">DeepSeek</span>
          <div class="t-item ms-3"><svg class="ic"><use href="#i-wifi" /></svg>局域互联</div>
          <div class="t-item ms-3"><svg class="ic"><use href="#i-appwin" /></svg>导出EXE</div>
          <div class="sq-btn d-flex align-items-center justify-content-center ms-3"><svg class="ic"><use href="#i-uparrow" /></svg></div>
          <div class="sq-btn d-flex align-items-center justify-content-center ms-3"><svg class="ic"><use href="#i-x" /></svg></div>
        </div>
      </div>

      <div class="tool-row d-flex align-items-center">
        <div class="d-flex align-items-center top-tools">
          <div class="t-item"><svg class="ic"><use href="#i-folderplus" /></svg>创建项目</div>
          <div class="t-item"><svg class="ic"><use href="#i-downc" /></svg>导入</div>
          <div class="t-item"><svg class="ic"><use href="#i-upc" /></svg>导出</div>
          <div class="t-item"><svg class="ic"><use href="#i-abox" /></svg>快捷键</div>
          <div class="t-item phone-item"><svg class="ic-phone"><use href="#i-phone" /></svg>手机连接</div>
          <div class="t-item"><svg class="ic"><use href="#i-boot" /></svg>开机启动</div>
          <div class="t-item"><svg class="ic"><use href="#i-cal" /></svg>定时任务</div>
          <div class="t-item"><svg class="ic"><use href="#i-winline" /></svg>多开管理</div>
          <div class="t-item"><svg class="ic"><use href="#i-cloud" /></svg>更新</div>
        </div>
        <div class="ms-auto d-flex align-items-center top-links">
          <div class="t-item app-green"><svg class="ic"><use href="#i-steam" /></svg>应用库</div>
          <div class="t-item"><svg class="ic"><use href="#i-help" /></svg>教程</div>
          <div class="t-item"><svg class="ic"><use href="#i-chatd" /></svg>反馈</div>
        </div>
      </div>

      <div class="main-row d-flex">
        <div class="left-col d-flex flex-column">
          <div class="find-box d-flex align-items-center">
            <input class="find-input flex-grow-1" type="text" placeholder="搜索" />
            <div class="find-btn d-flex align-items-center justify-content-center"><svg><use href="#i-find" /></svg></div>
          </div>
          <div class="panel-title d-flex align-items-center justify-content-center">项目管理</div>
          <div class="tree-area d-flex">
            <div class="tree-list">
              <div class="tree-row lv0 d-flex align-items-center"><span class="arrow-slot"><svg class="arrow-open"><use href="#i-open3" /></svg></span><svg class="tree-folder"><use href="#i-pfolder" /></svg>测试</div>
              <div class="tree-row lv1 d-flex align-items-center"><span class="arrow-slot"><svg class="arrow-open"><use href="#i-open3" /></svg></span><svg class="tree-ic"><use href="#i-grid" /></svg>入口</div>
              <div class="tree-row lv2 d-flex align-items-center"><svg class="ic-play me-2"><use href="#i-play" /></svg>测试</div>
              <div class="tree-row lv1 d-flex align-items-center"><span class="arrow-slot"></span><svg class="tree-ic"><use href="#i-grid" /></svg>子程序</div>
              <div class="tree-row lv0 active d-flex align-items-center"><span class="arrow-slot"><svg class="arrow-open"><use href="#i-open3" /></svg></span><svg class="tree-folder"><use href="#i-pfolder" /></svg>菜单项目</div>
              <div class="tree-row lv1 d-flex align-items-center"><span class="arrow-slot"><svg class="arrow-shut"><use href="#i-shut3" /></svg></span><svg class="tree-ic"><use href="#i-grid" /></svg>入口</div>
              <div class="tree-row lv1 d-flex align-items-center"><span class="arrow-slot"><svg class="arrow-shut"><use href="#i-shut3" /></svg></span><svg class="tree-ic"><use href="#i-grid" /></svg>鼠标操作</div>
              <div class="tree-row lv1 d-flex align-items-center"><span class="arrow-slot"><svg class="arrow-shut"><use href="#i-shut3" /></svg></span><svg class="tree-ic"><use href="#i-grid" /></svg>键盘操作</div>
              <div class="tree-row lv1 d-flex align-items-center"><span class="arrow-slot"><svg class="arrow-shut"><use href="#i-shut3" /></svg></span><svg class="tree-ic"><use href="#i-grid" /></svg>延迟等待</div>
              <div class="tree-row lv1 d-flex align-items-center"><span class="arrow-slot"><svg class="arrow-shut"><use href="#i-shut3" /></svg></span><svg class="tree-ic"><use href="#i-grid" /></svg>图色识别</div>
              <div class="tree-row lv1 d-flex align-items-center"><span class="arrow-slot"><svg class="arrow-shut"><use href="#i-shut3" /></svg></span><svg class="tree-ic"><use href="#i-grid" /></svg>如果</div>
            </div>
            <div class="sb-track tree-track">
              <svg class="sb-arrow sb-up"><use href="#i-sbup" /></svg>
              <div class="sb-thumb thumb-tree"></div>
              <svg class="sb-arrow sb-down"><use href="#i-sbdown" /></svg>
            </div>
          </div>
          <div class="cfg-area flex-grow-1">
            <div class="cfg-head d-flex align-items-center"><svg class="arrow-open"><use href="#i-open3" /></svg>应用程序配置</div>
            <div class="app-tile d-flex flex-column align-items-center">
              <svg class="cube-ic"><use href="#i-cube3" /></svg>
              <div class="tile-name">菜单项目</div>
            </div>
            <div class="tile-tools d-flex justify-content-center">
              <svg class="ic-24"><use href="#i-image" /></svg>
              <svg class="ic-24"><use href="#i-earth" /></svg>
              <svg class="ic-24"><use href="#i-finger" /></svg>
              <div class="tile-x d-flex align-items-center justify-content-center"><svg class="ic"><use href="#i-x" /></svg></div>
            </div>
            <div class="cfg-form">
              <label class="cfg-label">应用名称</label>
              <input class="form-control cfg-input" type="text" value="菜单项目" />
              <label class="cfg-label">应用描述</label>
              <input class="form-control cfg-input" type="text" />
              <div class="cfg-actions d-flex justify-content-center gap-4">
                <button class="btn cfg-btn" type="button">保存</button>
                <button class="btn cfg-btn" type="button">关闭</button>
              </div>
            </div>
          </div>
        </div>

        <div class="gutter"></div>

        <div class="mid-col d-flex flex-column">
          <div class="run-row d-flex align-items-center">
            <div class="nav-part d-flex align-items-center">
              <svg class="nav-ic"><use href="#i-back" /></svg>
              <svg class="nav-ic"><use href="#i-forward" /></svg>
            </div>
            <div class="run-part d-flex align-items-center">
              <div class="run-item run-go"><svg class="ic-play"><use href="#i-play" /></svg>运行</div>
              <div class="run-item run-go"><svg class="ic-play"><use href="#i-play" /></svg>循环</div>
              <div class="run-item"><svg class="ic"><use href="#i-abox" /></svg>快捷键</div>
              <div class="run-item"><svg class="ic"><use href="#i-hat" /></svg>问AI</div>
              <div class="mode-group d-flex">
                <div class="mode-item on">基础模式</div>
                <div class="mode-item">硬件模式</div>
                <div class="mode-item">后台模式</div>
              </div>
              <div class="run-item run-go mode-search"><div class="find-btn d-flex align-items-center justify-content-center"><svg><use href="#i-find" /></svg></div>步骤搜索</div>
            </div>
          </div>

          <div class="op-panel">
            <div class="op-title d-flex align-items-center">
              <span class="op-name">测试</span>
              <div class="op-link"><svg class="ic"><use href="#i-popup" /></svg>弹出窗口</div>
              <div class="op-link"><svg class="ic"><use href="#i-tools" /></svg>模板库</div>
            </div>
            <div class="op-grid">
              <div class="op-line">
                <div class="op-cell"><svg><use href="#i-cursor" /></svg>鼠标操作</div>
                <div class="op-cell"><svg><use href="#i-kb" /></svg>键盘操作</div>
                <div class="op-cell"><svg><use href="#i-video" /></svg>键鼠录制</div>
                <div class="op-cell"><svg><use href="#i-alarm" /></svg>延迟等待</div>
                <div class="op-cell"><svg><use href="#i-image" /></svg>图色识别</div>
                <div class="op-cell"><svg><use href="#i-robot" /></svg>人工智能</div>
                <div class="op-cell"><svg><use href="#i-branch" /></svg>如果</div>
                <div class="op-cell"><svg><use href="#i-loop" /></svg>循环</div>
              </div>
              <div class="op-line">
                <div class="op-cell"><svg><use href="#i-cubes" /></svg>调子程序</div>
                <div class="op-cell"><svg><use href="#i-chats" /></svg>交互窗口</div>
                <div class="op-cell"><svg><use href="#i-win" /></svg>系统功能</div>
                <div class="op-cell"><svg><use href="#i-appwin" /></svg>我的数据</div>
                <div class="op-cell"><svg><use href="#i-appwin" /></svg>后台多开</div>
                <div class="op-cell"><svg><use href="#i-appwin" /></svg>窗口模式</div>
              </div>
            </div>
            <div class="op-edit">
              <div class="op-cell"><svg><use href="#i-undo" /></svg>撤销</div>
              <div class="op-cell"><svg><use href="#i-pencil" /></svg>编辑</div>
              <div class="op-cell"><svg><use href="#i-copy" /></svg>复制</div>
              <div class="op-cell"><svg><use href="#i-paste" /></svg>粘贴</div>
              <div class="op-cell"><svg><use href="#i-trash" /></svg>删除</div>
              <div class="op-cell"><svg><use href="#i-upo" /></svg>上移</div>
              <div class="op-cell"><svg><use href="#i-downo" /></svg>下移</div>
              <div class="op-cell"><svg><use href="#i-gearbars" /></svg>批量修改</div>
              <div class="op-cell"><svg><use href="#i-truck" /></svg>移动到</div>
            </div>
          </div>

          <div class="step-area d-flex">
            <div class="step-list">
              <div class="step-row first-cut d-flex align-items-center"><span class="num">37</span><svg class="step-ic"><use href="#i-wand" /></svg>随机数据</div>
              <div class="step-row loop-row d-flex align-items-center"><span class="arrow-slot"><svg class="arrow-open"><use href="#i-open3" /></svg></span><svg class="step-ic c-green"><use href="#i-loop" /></svg>条件循环<span class="val ms-2">进入循环</span></div>
              <div class="fold-wrap d-flex">
                <div class="outer-arrow d-flex align-items-center"><svg class="arrow-open"><use href="#i-open3" /></svg></div>
                <div class="fold-head flex-grow-1 d-flex align-items-center">
                  <span class="brace">{ }</span>步骤折叠1<span class="val">方向键[🠒]</span>
                  <div class="ms-auto d-flex align-items-center fold-run">
                    <svg class="ic-play"><use href="#i-play" /></svg><span class="fold-run-text">运行</span>
                    <div class="run-item"><svg class="ic"><use href="#i-hat" /></svg>问AI</div>
                  </div>
                </div>
              </div>
              <div class="fold-box">
                <div class="in-row d-flex align-items-center"><span class="num">40</span><svg class="in-kb c-teal"><use href="#i-kb" /></svg>键盘5<span class="val">按下🠒</span></div>
                <div class="in-row d-flex align-items-center"><span class="num">41</span><svg class="in-ic c-steel"><use href="#i-alarm" /></svg>延迟1<span class="val">1000</span></div>
                <div class="in-row d-flex align-items-center"><span class="num">42</span><svg class="in-kb c-teal"><use href="#i-kb" /></svg>键盘6<span class="val">抬起🠒</span></div>
                <div class="in-row d-flex align-items-center"><span class="num">43</span><svg class="in-ic"><use href="#i-wand" /></svg>随机数据1</div>
                <div class="in-row d-flex align-items-center"><span class="num">44</span><svg class="in-kb"><use href="#i-ocr" /></svg>文字识别
                  <div class="drop-line"><span class="drop-l"></span><span class="drop-r"></span></div>
                </div>
                <div class="in-row d-flex align-items-center"><span class="num">45</span><svg class="in-ic"><use href="#i-cubes" /></svg>运行子程序1</div>
                <div class="in-row d-flex align-items-center"><span class="num">46</span><svg class="in-ic"><use href="#i-excel" /></svg>Excel<span class="val">打开Workbook</span></div>
                <div class="in-row d-flex align-items-center"><span class="num">47</span><svg class="in-ic"><use href="#i-python" /></svg>Python</div>
                <div class="in-row d-flex align-items-center"><span class="num">48</span><svg class="in-ic"><use href="#i-open" /></svg>文件夹1</div>
              </div>
            </div>
            <div class="sb-track">
              <svg class="sb-arrow sb-up"><use href="#i-sbup" /></svg>
              <div class="sb-thumb thumb-steps"></div>
              <svg class="sb-arrow sb-down"><use href="#i-sbdown" /></svg>
            </div>
          </div>

          <div class="check-row d-flex align-items-center">
            <label class="chk"><input class="form-check-input" type="checkbox" checked />运行高亮</label>
            <label class="chk"><input class="form-check-input" type="checkbox" checked />步骤日志</label>
            <label class="chk"><input class="form-check-input" type="checkbox" checked />系统日志</label>
            <label class="chk"><input class="form-check-input" type="checkbox" />慢速运行</label>
            <label class="chk"><input class="form-check-input" type="checkbox" />项目变量箱</label>
            <div class="op-link ms-1"><svg class="ic"><use href="#i-popup" /></svg>弹出日志</div>
          </div>
          <div class="flex-grow-1"></div>
        </div>

        <div class="gutter"></div>

        <div class="side-col">
          <div class="side-btn active d-flex align-items-center justify-content-center"><svg><use href="#i-ghost" /></svg></div>
          <div class="side-btn d-flex align-items-center justify-content-center"><svg><use href="#i-gear" /></svg></div>
          <div class="side-btn d-flex align-items-center justify-content-center"><svg><use href="#i-image" /></svg></div>
          <div class="side-btn d-flex align-items-center justify-content-center"><svg><use href="#i-kb" /></svg></div>
          <div class="side-btn d-flex align-items-center justify-content-center"><svg><use href="#i-branch" /></svg></div>
          <div class="side-btn d-flex align-items-center justify-content-center"><svg><use href="#i-clipdata" /></svg></div>
          <div class="side-btn d-flex align-items-center justify-content-center"><svg><use href="#i-chats" /></svg></div>
          <div class="side-btn d-flex align-items-center justify-content-center"><svg><use href="#i-cubes" /></svg></div>
        </div>

        <div class="right-col">
          <div class="mod-search d-flex align-items-center">
            <input class="find-input flex-grow-1" type="text" placeholder="搜索模块" />
            <div class="find-btn d-flex align-items-center justify-content-center"><svg><use href="#i-find" /></svg></div>
          </div>
          <div class="mod-area d-flex">
            <div class="mod-list">
              <div class="mod-row d-flex align-items-center"><svg class="ic-24"><use href="#i-open" /></svg>文件夹</div>
              <div class="mod-row d-flex align-items-center"><svg class="ic-24"><use href="#i-clip" /></svg>剪切板</div>
              <div class="mod-row d-flex align-items-center"><svg class="ic-24"><use href="#i-globe" /></svg>网络请求</div>
              <div class="mod-row d-flex align-items-center"><svg class="ic-24"><use href="#i-openai" /></svg>AI智能大模型</div>
              <div class="mod-row d-flex align-items-center"><svg class="ic-24"><use href="#i-ocr" /></svg>文字识别</div>
              <div class="mod-row d-flex align-items-center"><svg class="ic-24 c-blue"><use href="#i-image" /></svg>查找图片</div>
              <div class="mod-row d-flex align-items-center"><svg class="ic-24 c-steel"><use href="#i-scan" /></svg>查找文字</div>
              <div class="mod-row d-flex align-items-center"><svg class="ic-24 c-blue"><use href="#i-drop" /></svg>多色找图</div>
              <div class="mod-row d-flex align-items-center"><svg class="ic-24 c-lime"><use href="#i-face" /></svg>验证码</div>
              <div class="mod-row d-flex align-items-center"><svg class="ic-24"><use href="#i-cctv" /></svg>Yolo检测</div>
              <div class="mod-row d-flex align-items-center"><svg class="ic-24"><use href="#i-camera" /></svg>图片截取</div>
              <div class="mod-row d-flex align-items-center"><svg class="ic-24"><use href="#i-fileimg" /></svg>加载图片</div>
              <div class="mod-row d-flex align-items-center"><svg class="ic-24 c-blue"><use href="#i-drop" /></svg>获取坐标颜色</div>
              <div class="mod-row d-flex align-items-center"><svg class="ic-24 c-blue"><use href="#i-drop" /></svg>获取颜色数量</div>
              <div class="mod-row active d-flex align-items-center"><svg class="ic-24 c-blue"><use href="#i-image" /></svg>查找图片-左键单击</div>
              <div class="mod-row d-flex align-items-center"><svg class="ic-24 c-steel"><use href="#i-scan" /></svg>查找文字-左键单击</div>
              <div class="mod-row d-flex align-items-center"><svg class="ic-24 c-blue"><use href="#i-drop" /></svg>多色找图-左键单击</div>
              <div class="mod-row d-flex align-items-center"><svg class="ic-24 c-blue"><use href="#i-image" /></svg>查找图片-鼠标双击</div>
              <div class="mod-row d-flex align-items-center"><svg class="ic-24 c-steel"><use href="#i-scan" /></svg>查找文字-鼠标双击</div>
              <div class="mod-row d-flex align-items-center"><svg class="ic-24 c-blue"><use href="#i-drop" /></svg>多色找图-鼠标双击</div>
              <div class="mod-row d-flex align-items-center"><svg class="ic-24 c-blue"><use href="#i-image" /></svg>查找图片-找到为止-左键单击</div>
              <div class="mod-row d-flex align-items-center"><svg class="ic-24 c-steel"><use href="#i-scan" /></svg>查找文字-找到为止-左键单击</div>
            </div>
            <div class="sb-track">
              <svg class="sb-arrow sb-up"><use href="#i-sbup" /></svg>
              <div class="sb-thumb thumb-mods"></div>
              <svg class="sb-arrow sb-down"><use href="#i-sbdown" /></svg>
            </div>
          </div>
        </div>
      </div>

      <div class="status-row d-flex align-items-center justify-content-end">v5.0.0.3 64位</div>
    </div>

    <script src="https://cdn.jsdelivr.net/npm/bootstrap@5.3.3/dist/js/bootstrap.bundle.min.js"></script>
  </body>
</html>
